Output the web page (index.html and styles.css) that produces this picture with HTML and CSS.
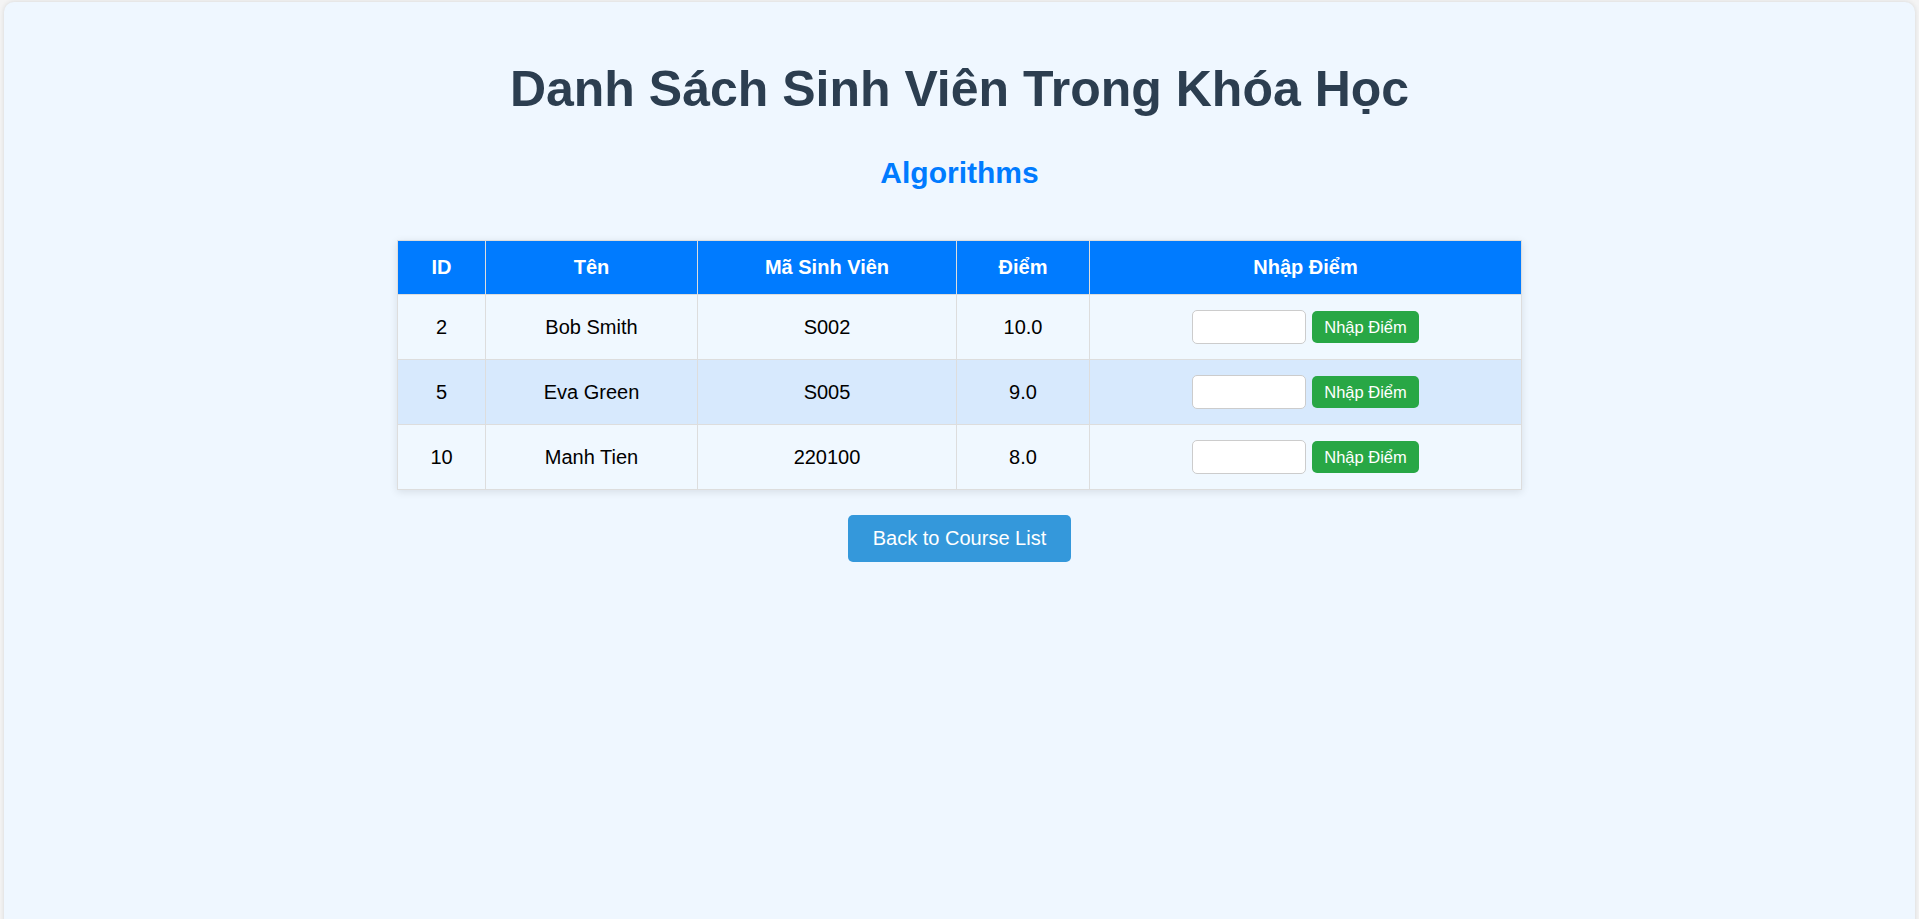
FILE: index.html
```html
<!DOCTYPE html>
<html lang="vi">
<head>
<meta charset="UTF-8">
<title>Danh Sách Sinh Viên Trong Khóa Học</title>
<link rel="stylesheet" href="styles.css">
</head>
<body>
<div class="container">
  <h1 class="title">Danh Sách Sinh Viên Trong Khóa Học</h1>
  <h2 class="course">Algorithms</h2>
  <table class="students">
    <thead>
      <tr>
        <th class="c-id">ID</th>
        <th class="c-name">Tên</th>
        <th class="c-code">Mã Sinh Viên</th>
        <th class="c-score">Điểm</th>
        <th class="c-input">Nhập Điểm</th>
      </tr>
    </thead>
    <tbody>
      <tr>
        <td>2</td>
        <td>Bob Smith</td>
        <td>S002</td>
        <td>10.0</td>
        <td><form class="grade-form"><input class="grade-input" type="text"><button class="grade-btn" type="button">Nhập Điểm</button></form></td>
      </tr>
      <tr>
        <td>5</td>
        <td>Eva Green</td>
        <td>S005</td>
        <td>9.0</td>
        <td><form class="grade-form"><input class="grade-input" type="text"><button class="grade-btn" type="button">Nhập Điểm</button></form></td>
      </tr>
      <tr>
        <td>10</td>
        <td>Manh Tien</td>
        <td>220100</td>
        <td>8.0</td>
        <td><form class="grade-form"><input class="grade-input" type="text"><button class="grade-btn" type="button">Nhập Điểm</button></form></td>
      </tr>
    </tbody>
  </table>
  <div class="actions">
    <a class="back-btn" href="#">Back to Course List</a>
  </div>
</div>
</body>
</html>
```
FILE: styles.css
```css
html, body {
  margin: 0;
  padding: 0;
}
body {
  background: #f4f4f4;
  font-family: "Liberation Sans", Arial, sans-serif;
  padding: 2px 4px 0;
  overflow: hidden;
}
.container {
  background: #eff7ff;
  border-radius: 10px;
  box-shadow: 0 0 5px rgba(0, 0, 0, 0.12);
  padding: 25px;
  min-height: 960px;
  box-sizing: border-box;
}
.title {
  margin: 34px 0 37px;
  font-size: 50px;
  line-height: 1.15;
  font-weight: bold;
  color: #2c3e50;
  text-align: center;
}
.course {
  margin: 0 0 50px;
  font-size: 30px;
  line-height: 1.15;
  font-weight: bold;
  color: #007bff;
  text-align: center;
}
.students {
  border-collapse: collapse;
  margin: 0 auto;
  width: 1124px;
  table-layout: fixed;
  box-shadow: 0 2px 8px rgba(0, 0, 0, 0.1);
  border: 1px solid #ddd;
}
.students th,
.students td {
  border: 1px solid #ddd;
  padding: 15px;
  text-align: center;
  font-size: 20px;
  line-height: 23px;
  box-sizing: border-box;
}
.students th {
  background: #007bff;
  color: #fff;
  font-weight: bold;
}
.students td {
  color: #000;
  background: #f0f8ff;
}
.students tbody tr:nth-child(even) td {
  background: #d7e9fd;
}
.c-id { width: 88px; }
.c-name { width: 212px; }
.c-code { width: 259px; }
.c-score { width: 133px; }
.c-input { width: 432px; }
.grade-form {
  display: flex;
  justify-content: center;
  align-items: center;
  gap: 6px;
  margin: 0;
}
.grade-input {
  width: 114px;
  height: 34px;
  box-sizing: border-box;
  border: 1px solid #ccc;
  border-radius: 5px;
  background: #fff;
  padding: 4px 6px;
  font-size: 16px;
}
.grade-btn {
  background: #28a745;
  color: #fff;
  border: none;
  border-radius: 5px;
  height: 32px;
  padding: 0 12px;
  font-family: "Liberation Sans", Arial, sans-serif;
  font-size: 16.5px;
  cursor: pointer;
}
.actions {
  margin-top: 25px;
  text-align: center;
}
.back-btn {
  display: inline-block;
  background: #3498db;
  color: #fff;
  text-decoration: none;
  font-size: 20px;
  line-height: 23px;
  padding: 12px 25px;
  border-radius: 5px;
}
```
